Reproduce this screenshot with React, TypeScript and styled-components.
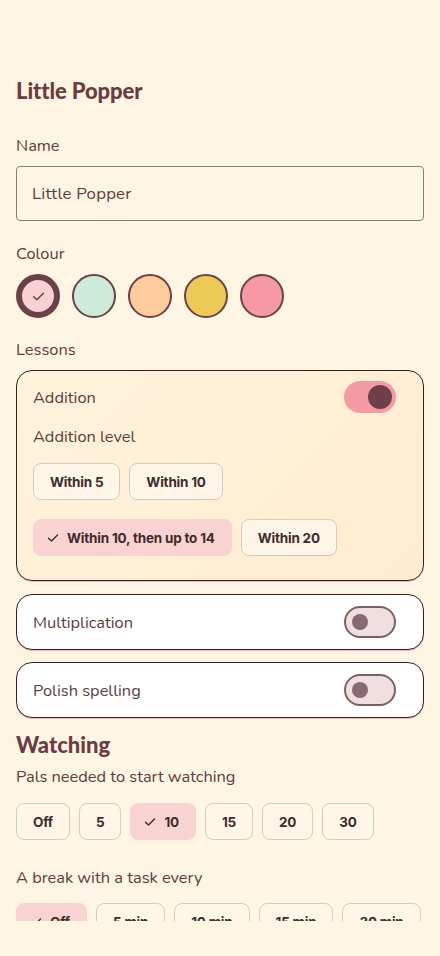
import React from "react";
import styled, { createGlobalStyle } from "styled-components";

const Global = createGlobalStyle`
  html, body { margin: 0; padding: 0; background: #fef5e2; }
  body { font-family: "Nunito", "Lato", "Noto Sans", sans-serif; color: #5c3a3e; }
  * { box-sizing: border-box; }
`;

const Page = styled.div`
  width: 440px;
  height: 956px;
  background: #fef5e2;
  display: flex;
  flex-direction: column;
`;

const Scroll = styled.div`
  height: 921px;
  flex-shrink: 0;
  overflow: hidden;
  padding: 77px 16px 0;
  display: flex;
  flex-direction: column;
  & > * { flex-shrink: 0; }
`;

const Title = styled.h1`
  margin: 0;
  font-family: "Lato", sans-serif;
  font-weight: 900;
  font-size: 22px;
  line-height: 28px;
  color: #6b3c44;
  letter-spacing: -0.1px;
`;

const Label = styled.div<{ $mt: number }>`
  margin-top: ${(p) => p.$mt}px;
  font-size: 16.4px;
  line-height: 24px;
  color: #5f3b40;
`;

const Input = styled.input`
  margin-top: 8px;
  height: 55px;
  width: 100%;
  border: 1px solid #8c7b74;
  border-radius: 4px;
  background: transparent;
  padding: 0 15px;
  font-family: inherit;
  font-size: 16.8px;
  letter-spacing: 0.2px;
  color: #5f3b40;
  outline: none;
`;

const Swatches = styled.div`
  margin-top: 8px;
  display: flex;
  gap: 12px;
`;

const Swatch = styled.div<{ $c: string; $sel?: boolean }>`
  width: 44px;
  height: 44px;
  border-radius: 50%;
  background: ${(p) => p.$c};
  border: ${(p) => (p.$sel ? "6px" : "2px")} solid #6d4048;
  display: flex;
  align-items: center;
  justify-content: center;
`;

const Card = styled.div<{ $active?: boolean; $mt: number }>`
  margin-top: ${(p) => p.$mt}px;
  border: 1px solid #3b1c21;
  border-radius: 16px;
  box-shadow: 0 1px 0 #f3b7b9;
  background: ${(p) =>
    p.$active ? "linear-gradient(135deg, #fff3dc 0%, #ffecd0 100%)" : "#ffffff"};
  padding: ${(p) => (p.$active ? "10px 27px 24px 16px" : "11px 27px 11px 16px")};
  display: flex;
  flex-direction: column;
`;

const Row = styled.div`
  display: flex;
  align-items: center;
  justify-content: space-between;
  height: 32px;
`;

const RowText = styled.span`
  font-size: 16.4px;
  color: #5f3b40;
`;

const Track = styled.div<{ $on?: boolean }>`
  width: 52px;
  height: 32px;
  border-radius: 16px;
  background: ${(p) => (p.$on ? "#f59ba4" : "#f1dfe0")};
  border: 2px solid ${(p) => (p.$on ? "#f59ba4" : "#7b6065")};
  display: flex;
  align-items: center;
  justify-content: ${(p) => (p.$on ? "flex-end" : "flex-start")};
  padding: 0 ${(p) => (p.$on ? "2px" : "6px")};
`;

const Knob = styled.div<{ $on?: boolean }>`
  width: ${(p) => (p.$on ? 24 : 16)}px;
  height: ${(p) => (p.$on ? 24 : 16)}px;
  border-radius: 50%;
  background: ${(p) => (p.$on ? "#6d4049" : "#846c70")};
`;

const SubLabel = styled.div`
  margin-top: 12px;
  font-size: 16.4px;
  line-height: 24px;
  color: #5f3b40;
`;

const Chips = styled.div<{ $mt: number; $rowGap?: number }>`
  margin-top: ${(p) => p.$mt}px;
  display: flex;
  flex-wrap: wrap;
  column-gap: 9px;
  row-gap: ${(p) => p.$rowGap ?? 9}px;
`;

const Chip = styled.div<{ $sel?: boolean }>`
  height: 37px;
  display: flex;
  align-items: center;
  gap: 8px;
  padding: ${(p) => (p.$sel ? "0 16px 0 13px" : "0 16px")};
  border-radius: 8px;
  border: 1px solid ${(p) => (p.$sel ? "#f9d3d2" : "#dcc9ba")};
  background: ${(p) => (p.$sel ? "#f9d3d2" : "#fff6e8")};
  font-family: "Inter", "Lato", sans-serif;
  font-weight: 700;
  font-size: 13.5px;
  letter-spacing: -0.2px;
  color: #3f2a2c;
  white-space: nowrap;
`;

const Heading = styled.h2`
  margin: 13px 0 0;
  font-family: "Lato", sans-serif;
  font-weight: 900;
  font-size: 22px;
  line-height: 28px;
  color: #6b3c44;
`;

const Footer = styled.div`
  flex: 1;
  background: #fef5e2;
`;

const Check = ({ size = 12, color = "#3f2a2c" }: { size?: number; color?: string }) => (
  <svg width={size} height={size} viewBox="0 0 12 12" fill="none">
    <path d="M1.5 6.2 L4.5 9 L10.5 3" stroke={color} strokeWidth="1.4" strokeLinecap="round" strokeLinejoin="round" />
  </svg>
);

const Toggle = ({ on }: { on?: boolean }) => (
  <Track $on={on}>
    <Knob $on={on} />
  </Track>
);

const ChipItem = ({ label, sel }: { label: string; sel?: boolean }) => (
  <Chip $sel={sel}>
    {sel && <Check />}
    {label}
  </Chip>
);

export default function App() {
  const colours = ["#f9d0d3", "#cdebd9", "#fecb9e", "#edc956", "#f59aa4"];
  return (
    <Page>
      <Global />
      <Scroll>
        <Title>Little Popper</Title>
        <Label $mt={29}>Name</Label>
        <Input defaultValue="Little Popper" />
        <Label $mt={21}>Colour</Label>
        <Swatches>
          {colours.map((c, i) => (
            <Swatch key={c} $c={c} $sel={i === 0}>
              {i === 0 && <Check size={13} color="#6d4048" />}
            </Swatch>
          ))}
        </Swatches>
        <Label $mt={20}>Lessons</Label>
        <Card $active $mt={8}>
          <Row>
            <RowText>Addition</RowText>
            <Toggle on />
          </Row>
          <SubLabel>Addition level</SubLabel>
          <Chips $mt={14} $rowGap={19}>
            <ChipItem label="Within 5" />
            <ChipItem label="Within 10" />
            <ChipItem label="Within 10, then up to 14" sel />
            <ChipItem label="Within 20" />
          </Chips>
        </Card>
        <Card $mt={13}>
          <Row>
            <RowText>Multiplication</RowText>
            <Toggle />
          </Row>
        </Card>
        <Card $mt={12}>
          <Row>
            <RowText>Polish spelling</RowText>
            <Toggle />
          </Row>
        </Card>
        <Heading>Watching</Heading>
        <Label $mt={6}>Pals needed to start watching</Label>
        <Chips $mt={14}>
          {["Off", "5", "10", "15", "20", "30"].map((l) => (
            <ChipItem key={l} label={l} sel={l === "10"} />
          ))}
        </Chips>
        <Label $mt={26}>A break with a task every</Label>
        <Chips $mt={13}>
          {["Off", "5 min", "10 min", "15 min", "30 min"].map((l) => (
            <ChipItem key={l} label={l} sel={l === "Off"} />
          ))}
        </Chips>
      </Scroll>
      <Footer />
    </Page>
  );
}
